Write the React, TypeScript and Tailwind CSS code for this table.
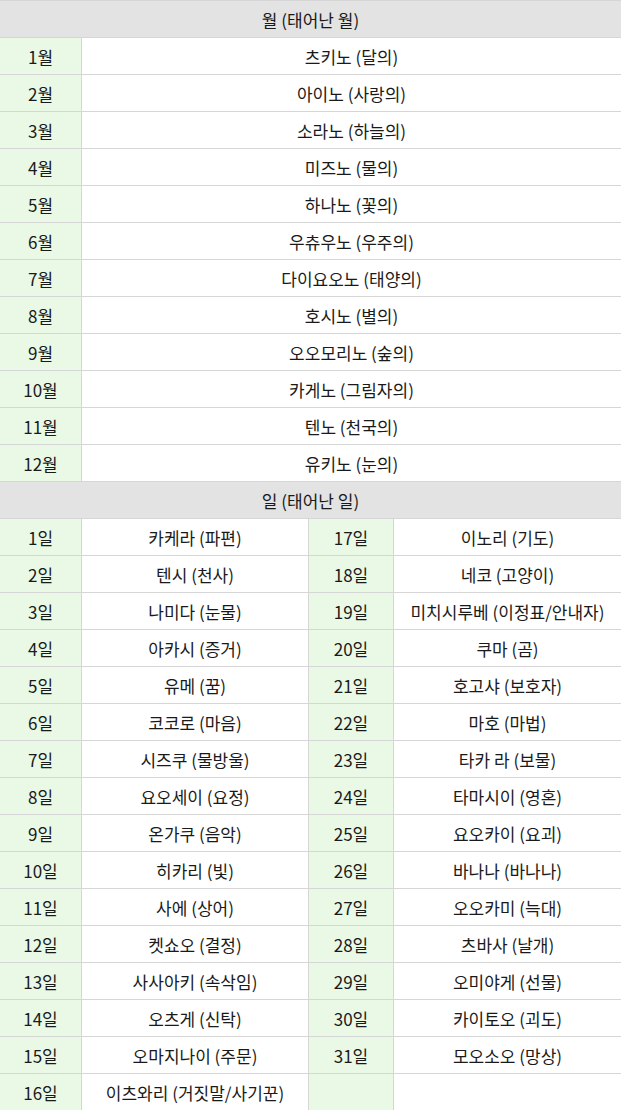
const months: [string, string][] = [
  ['1월', '츠키노 (달의)'],
  ['2월', '아이노 (사랑의)'],
  ['3월', '소라노 (하늘의)'],
  ['4월', '미즈노 (물의)'],
  ['5월', '하나노 (꽃의)'],
  ['6월', '우츄우노 (우주의)'],
  ['7월', '다이요오노 (태양의)'],
  ['8월', '호시노 (별의)'],
  ['9월', '오오모리노 (숲의)'],
  ['10월', '카게노 (그림자의)'],
  ['11월', '텐노 (천국의)'],
  ['12월', '유키노 (눈의)'],
];

const days: [string, string, string, string][] = [
  ['1일', '카케라 (파편)', '17일', '이노리 (기도)'],
  ['2일', '텐시 (천사)', '18일', '네코 (고양이)'],
  ['3일', '나미다 (눈물)', '19일', '미치시루베 (이정표/안내자)'],
  ['4일', '아카시 (증거)', '20일', '쿠마 (곰)'],
  ['5일', '유메 (꿈)', '21일', '호고샤 (보호자)'],
  ['6일', '코코로 (마음)', '22일', '마호 (마법)'],
  ['7일', '시즈쿠 (물방울)', '23일', '타카 라 (보물)'],
  ['8일', '요오세이 (요정)', '24일', '타마시이 (영혼)'],
  ['9일', '온가쿠 (음악)', '25일', '요오카이 (요괴)'],
  ['10일', '히카리 (빛)', '26일', '바나나 (바나나)'],
  ['11일', '사에 (상어)', '27일', '오오카미 (늑대)'],
  ['12일', '켓쇼오 (결정)', '28일', '츠바사 (날개)'],
  ['13일', '사사아키 (속삭임)', '29일', '오미야게 (선물)'],
  ['14일', '오츠게 (신탁)', '30일', '카이토오 (괴도)'],
  ['15일', '오마지나이 (주문)', '31일', '모오소오 (망상)'],
  ['16일', '이츠와리 (거짓말/사기꾼)', '', ''],
];

export default function App() {
  const cell = 'flex items-center justify-center whitespace-nowrap';
  return (
    <div
      className="w-[621px] bg-white text-[17px] leading-none text-[#1a1a1a] border-t border-[#d6d6d6]"
      style={{ fontFamily: '"Noto Sans CJK KR", "Noto Sans", sans-serif' }}
    >
      {/* Month header */}
      <div className={`${cell} h-[37px] bg-[#e3e3e3] border-b border-[#d6d6d6]`}>
        월 (태어난 월)
      </div>
      {months.map(([m, name]) => (
        <div key={m} className="flex h-[37px] border-b border-[#d6d6d6]">
          <div className={`${cell} w-[82px] bg-[#e9f9e6] border-r border-[#d6d6d6]`}>{m}</div>
          <div className={`${cell} flex-1`}>{name}</div>
        </div>
      ))}

      {/* Day header */}
      <div className={`${cell} h-[37px] bg-[#e3e3e3] border-b border-[#d6d6d6]`}>
        일 (태어난 일)
      </div>
      {days.map(([d1, n1, d2, n2]) => (
        <div key={d1} className="flex h-[37px] border-b border-[#d6d6d6]">
          <div className={`${cell} w-[82px] bg-[#e9f9e6] border-r border-[#d6d6d6]`}>{d1}</div>
          <div className={`${cell} w-[227px] border-r border-[#d6d6d6]`}>{n1}</div>
          <div className={`${cell} w-[85px] bg-[#e9f9e6] border-r border-[#d6d6d6]`}>{d2}</div>
          <div className={`${cell} flex-1`}>{n2}</div>
        </div>
      ))}
    </div>
  );
}
